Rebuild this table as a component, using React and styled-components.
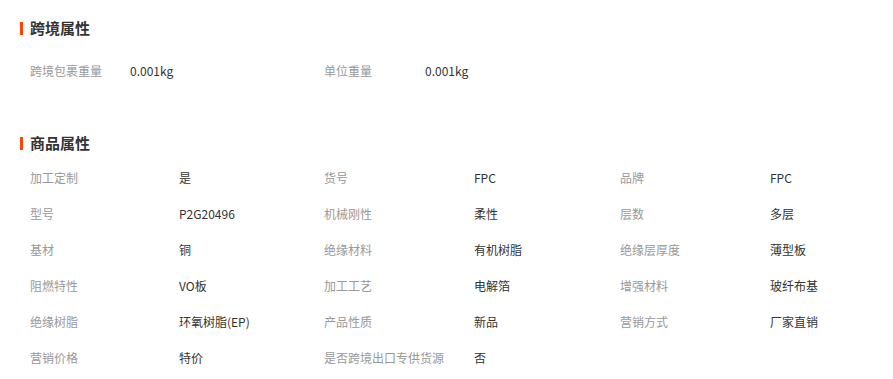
import React from "react";
import styled, { createGlobalStyle } from "styled-components";

const Global = createGlobalStyle`
  html, body { margin: 0; padding: 0; background: #fff; }
  body { font-family: "Noto Sans CJK SC", "Noto Sans", sans-serif; }
`;

const Page = styled.div`
  padding: 20px 0 0 20px;
  width: 893px;
  box-sizing: border-box;
`;

const Section = styled.section`
  margin-top: ${(p) => p.$top || 0}px;
`;

const Title = styled.h2`
  margin: 0;
  display: flex;
  align-items: center;
  height: 16px;
  font-size: 15px;
  font-weight: 700;
  color: #333;
  line-height: 16px;
  &::before {
    content: "";
    display: block;
    width: 3px;
    height: 13px;
    background: #ff4400;
    margin-right: 7px;
  }
`;

const Grid = styled.div`
  display: grid;
  grid-template-columns: ${(p) => p.$cols};
  margin-top: ${(p) => p.$gap}px;
  padding-left: 10px;
`;

const Cell = styled.div`
  height: 36px;
  line-height: 36px;
  font-size: 12px;
  white-space: nowrap;
  color: ${(p) => (p.$label ? "#999" : "#333")};
`;

const cross = [
  ["跨境包裹重量", "0.001kg"],
  ["单位重量", "0.001kg"],
];

const attrs = [
  ["加工定制", "是"],
  ["货号", "FPC"],
  ["品牌", "FPC"],
  ["型号", "P2G20496"],
  ["机械刚性", "柔性"],
  ["层数", "多层"],
  ["基材", "铜"],
  ["绝缘材料", "有机树脂"],
  ["绝缘层厚度", "薄型板"],
  ["阻燃特性", "VO板"],
  ["加工工艺", "电解箔"],
  ["增强材料", "玻纤布基"],
  ["绝缘树脂", "环氧树脂(EP)"],
  ["产品性质", "新品"],
  ["营销方式", "厂家直销"],
  ["营销价格", "特价"],
  ["是否跨境出口专供货源", "否"],
];

const renderPairs = (list) =>
  list.flatMap(([k, v]) => [
    <Cell key={k + "-k"} $label>
      {k}
    </Cell>,
    <Cell key={k + "-v"}>{v}</Cell>,
  ]);

export default function App() {
  return (
    <Page>
      <Global />
      <Section>
        <Title>跨境属性</Title>
        <Grid $cols="100px 194px 101px 194px" $gap={17}>
          {renderPairs(cross)}
        </Grid>
      </Section>
      <Section $top={46}>
        <Title>商品属性</Title>
        <Grid $cols="149px 145px 150px 146px 150px 145px" $gap={9}>
          {renderPairs(attrs)}
        </Grid>
      </Section>
    </Page>
  );
}
